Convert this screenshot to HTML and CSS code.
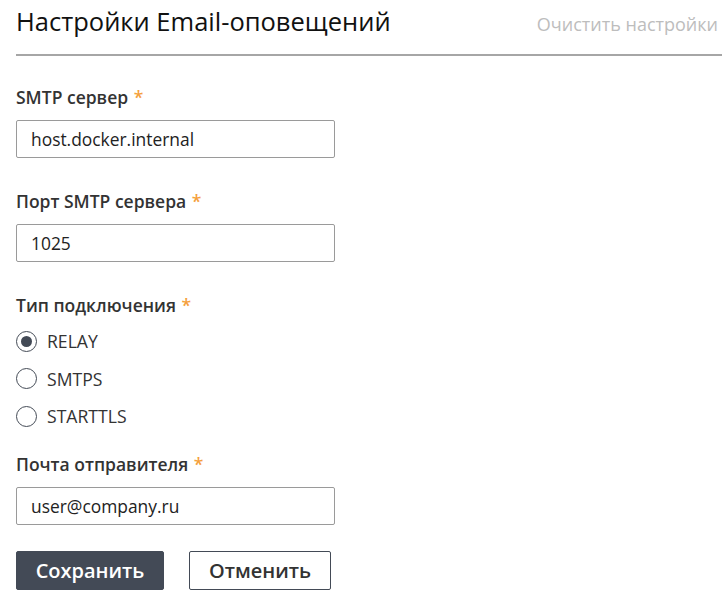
FILE: index.html
```html
<!DOCTYPE html>
<html lang="ru">
<head>
<meta charset="utf-8">
<link rel="stylesheet" href="styles.css">
</head>
<body>
<div class="page">
  <div class="header">
    <h1 class="title">Настройки Email-оповещений</h1>
    <span class="clear">Очистить настройки</span>
  </div>
  <form class="form">
    <div class="field">
      <label class="label">SMTP сервер <span class="req">*</span></label>
      <input class="input" type="text" value="host.docker.internal">
    </div>
    <div class="field">
      <label class="label">Порт SMTP сервера <span class="req">*</span></label>
      <input class="input" type="text" value="1025">
    </div>
    <div class="field field-radio">
      <label class="label label-radio">Тип подключения <span class="req">*</span></label>
      <div class="radios">
        <div class="radio"><span class="circle checked"></span><span class="rlabel">RELAY</span></div>
        <div class="radio"><span class="circle"></span><span class="rlabel">SMTPS</span></div>
        <div class="radio"><span class="circle"></span><span class="rlabel">STARTTLS</span></div>
      </div>
    </div>
    <div class="field">
      <label class="label">Почта отправителя <span class="req">*</span></label>
      <input class="input" type="text" value="user@company.ru">
    </div>
    <div class="actions">
      <button type="button" class="btn primary">Сохранить</button>
      <button type="button" class="btn secondary">Отменить</button>
    </div>
  </form>
</div>
</body>
</html>
```
FILE: styles.css
```css
* { box-sizing: border-box; }
html, body { margin: 0; padding: 0; background: #fff; }
body {
  font-family: "Open Sans", "Noto Sans", sans-serif;
  color: #333;
}
.page { padding-left: 16px; }
.header {
  display: flex;
  justify-content: space-between;
  align-items: baseline;
  border-bottom: 2px solid #a6a6a6;
  padding-top: 3px;
  height: 56px;
}
.title {
  margin: 0;
  font-size: 25.5px;
  font-weight: 400;
  color: #111;
  line-height: 36px;
}
.clear {
  font-size: 18px;
  color: #bdbdbd;
  padding-right: 4px;
}
.form { padding-top: 29px; }
.field { margin-bottom: 31px; }
.field-radio { margin-bottom: 25px; }
.label {
  display: block;
  font-size: 17.5px;
  font-weight: 600;
  color: #333;
  line-height: 24px;
  margin-bottom: 11px;
}
.label-radio { margin-bottom: 13px; }
.req { color: #f5a03c; margin-left: 1px; }
.input {
  display: block;
  width: 319px;
  height: 38px;
  border: 1px solid #9a9a9a;
  border-radius: 2px;
  padding: 0 14px;
  font-family: "Open Sans", "Noto Sans", sans-serif;
  font-size: 17.4px;
  color: #222;
  outline: none;
}
.radios { display: flex; flex-direction: column; gap: 15.5px; }
.radio { display: flex; align-items: center; gap: 10px; height: 22px; }
.circle {
  width: 21px; height: 21px;
  border: 1.5px solid #444b56;
  border-radius: 50%;
  display: flex; align-items: center; justify-content: center;
}
.circle.checked::after {
  content: "";
  width: 11px; height: 11px;
  border-radius: 50%;
  background: #434a56;
}
.rlabel { font-size: 17.6px; color: #333; }
.actions { display: flex; gap: 25px; margin-top: -5px; }
.btn {
  height: 39px;
  font-family: "Open Sans", "Noto Sans", sans-serif;
  font-size: 20px;
  font-weight: 600;
  border-radius: 2px;
  padding: 0 10px;
}
.primary {
  width: 148px;
  background: #434a56;
  color: #fff;
  border: 1px solid #434a56;
}
.secondary {
  width: 142px;
  background: #fff;
  color: #333;
  border: 1px solid #434a56;
}
```
